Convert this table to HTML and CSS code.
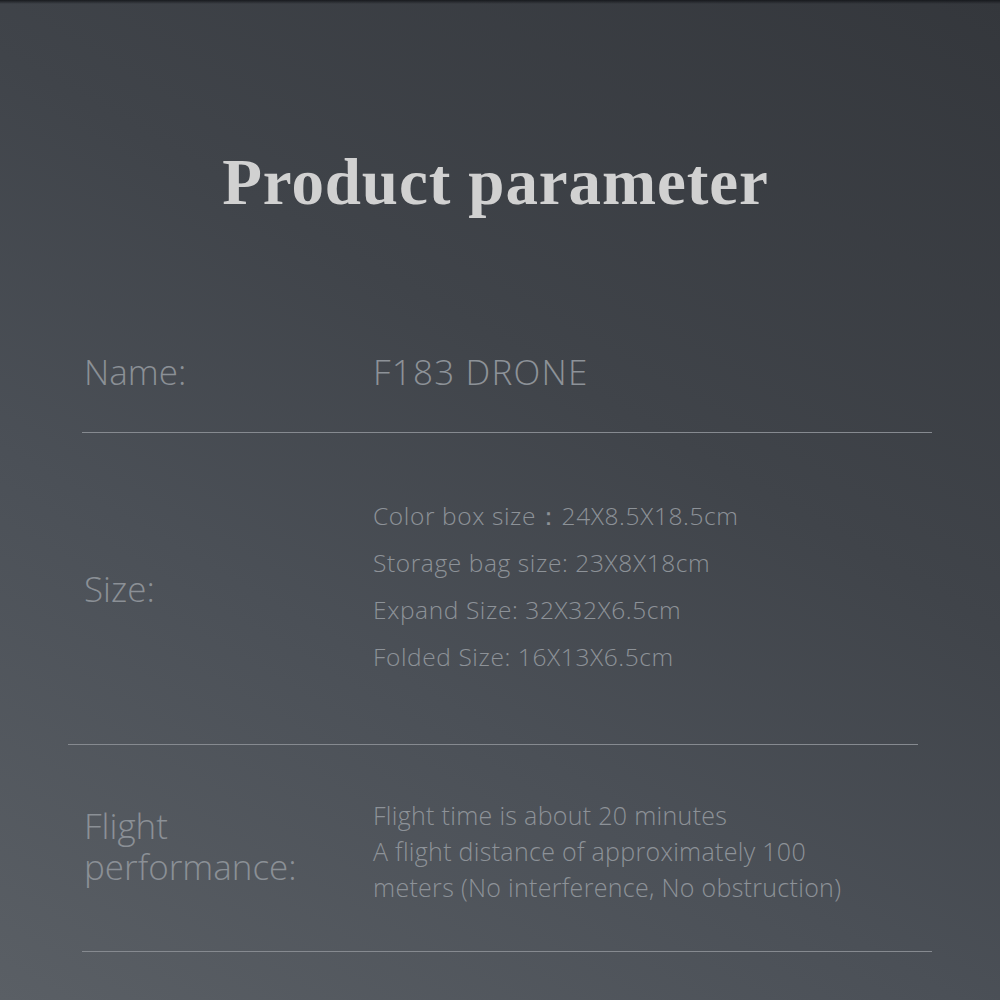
FILE: index.html
```html
<!DOCTYPE html>
<html>
<head>
<meta charset="utf-8">
<link rel="stylesheet" href="styles.css">
</head>
<body>
<div class="page">
  <header class="head">
    <h1 class="title">Product parameter</h1>
  </header>
  <section class="row row-name">
    <div class="label">Name:</div>
    <div class="value big">F183 DRONE</div>
  </section>
  <div class="rule rule-a"></div>
  <section class="row row-size">
    <div class="label">Size:</div>
    <div class="value list">
      <p>Color box size：24X8.5X18.5cm</p>
      <p>Storage bag size: 23X8X18cm</p>
      <p>Expand Size: 32X32X6.5cm</p>
      <p>Folded Size: 16X13X6.5cm</p>
    </div>
  </section>
  <div class="rule rule-b"></div>
  <section class="row row-flight">
    <div class="label two">Flight<br>performance:</div>
    <div class="value para">Flight time is about 20 minutes<br>A flight distance of approximately 100<br>meters (No interference, No obstruction)</div>
  </section>
  <div class="rule rule-a"></div>
</div>
</body>
</html>
```

FILE: styles.css
```css
html, body {
  margin: 0;
  padding: 0;
}
body {
  width: 1000px;
  height: 1000px;
  overflow: hidden;
  background:
    linear-gradient(180deg, rgba(20,22,26,0.9) 0px, rgba(20,22,26,0) 4px),
    linear-gradient(30deg, #5a5f65 0%, #4b5057 35%, #40444a 60%, #34373c 100%);
  font-family: "Open Sans", Lato, sans-serif;
  font-weight: 300;
  color: #8d9298;
}
.page {
  display: flex;
  flex-direction: column;
}
.head {
  height: 312px;
  display: flex;
  justify-content: center;
  padding-top: 144px;
  padding-right: 9px;
  box-sizing: border-box;
}
.title {
  margin: 0;
  font-family: "Liberation Serif", serif;
  font-weight: 700;
  font-size: 65px;
  line-height: 76px;
  color: #d1d1d1;
  letter-spacing: 0.9px;
}
.row {
  display: flex;
  align-items: center;
  padding-left: 84px;
}
.label {
  width: 289px;
  flex: none;
  font-size: 35px;
  line-height: 40px;
  color: #8b9096;
}
.label.two {
  line-height: 41px;
  margin-top: -4px;
}
.row-name {
  height: 120px;
}
.row-size {
  height: 311px;
}
.row-flight {
  height: 206px;
}
.value.big {
  font-size: 35px;
  line-height: 40px;
  letter-spacing: 1.2px;
}
.list p {
  margin: 0;
  font-size: 24.5px;
  line-height: 47px;
  letter-spacing: 0.6px;
}
.list {
  margin-top: -6px;
}
.para {
  font-size: 25px;
  line-height: 36px;
  letter-spacing: 0.3px;
  margin-top: 6px;
}
.rule {
  height: 1px;
  background: #868a90;
  width: 850px;
}
.rule-a {
  margin-left: 82px;
}
.rule-b {
  margin-left: 68px;
}
```
